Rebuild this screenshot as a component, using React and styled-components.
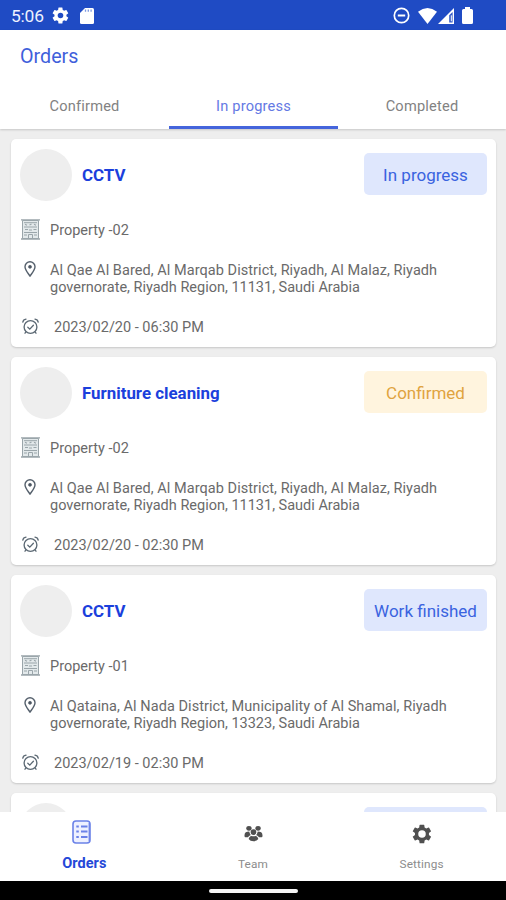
import React from "react";
import styled, { createGlobalStyle } from "styled-components";

const Global = createGlobalStyle`
  *, *::before, *::after { box-sizing: border-box; }
  body { margin: 0; background: #eee; font-family: Roboto, "Liberation Sans", sans-serif; }
`;
const Screen = styled.div`
  width: 506px; height: 900px; display: flex; flex-direction: column; overflow: hidden; background: #eeeeee;
`;
const StatusBar = styled.header`
  height: 30px; flex: none; display: flex; align-items: center; justify-content: space-between;
  padding: 1px 33px 0 11px; background: #1f4bc4; color: #fff;
`;
const StatusGroup = styled.div`
  display: flex; align-items: center;
`;
const Clock = styled.span`
  font-size: 17.4px; line-height: 20px; width: 41px; color: #eef2ff; letter-spacing: -0.2px;
`;
const Glyph = styled.svg`
  display: block; flex: none; width: ${(p) => p.$w}px; height: ${(p) => p.$h}px; margin-left: ${(p) => p.$gap || 0}px;
`;
const TopBar = styled.div`
  flex: none; height: 99px; background: #fff; display: flex; flex-direction: column; justify-content: space-between;
  box-shadow: 0 1px 2px rgba(0, 0, 0, 0.16); z-index: 1;
`;
const Title = styled.h1`
  margin: 0; padding: 14px 0 0 20px; font-size: 19.7px; font-weight: 400; line-height: 25px; color: #3f5fdb;
`;
const Tabs = styled.nav`
  display: grid; grid-template-columns: 169px 169px 168px; height: 46px;
`;
const Tab = styled.button`
  border: 0; background: none; padding: 2px 0 0; font: 400 14.6px/20px Roboto, sans-serif; letter-spacing: 0.2px;
  color: ${(p) => (p.$active ? "#6479e4" : "#828282")};
  border-bottom: 3px solid ${(p) => (p.$active ? "#4565dc" : "transparent")};
`;
const List = styled.main`
  flex: 1; min-height: 0; overflow: hidden; padding: 10px 10px 0 10.5px; display: flex; flex-direction: column; gap: 10.5px;
`;
const Card = styled.article`
  flex: none; height: 207.5px; padding: 10px 9px 0 9.5px; background: #fff; border-radius: 5px;
  box-shadow: 0 1px 2px rgba(0, 0, 0, 0.17);
`;
const CardHead = styled.div`
  display: flex; align-items: center; height: 51px;
`;
const Avatar = styled.div`
  width: 52px; height: 52px; border-radius: 50%; background: #eeeeee;
`;
const Service = styled.h2`
  flex: 1; margin: 0 0 0 10px; font-size: 16.9px; font-weight: 700; line-height: 22px; color: #1b3fdc;
`;
const Badge = styled.span`
  width: 123px; height: 42px; border-radius: 5px; display: grid; place-items: center; padding-top: 2px; margin-bottom: 2px;
  font-size: 17px; white-space: nowrap;
  background: ${(p) => (p.$tone === "amber" ? "#fff4de" : "#dfe7fd")};
  color: ${(p) => (p.$tone === "amber" ? "#dfa33f" : "#3a63e0")};
`;
const Detail = styled.div`
  display: grid; grid-template-columns: 20px 1fr; column-gap: ${(p) => p.$gap || 10}px; margin-top: ${(p) => p.$top}px;
  color: #6a6a6a; font-size: 14.5px; line-height: 17.5px;
`;
const AddressLine = styled.span`
  display: block; white-space: nowrap; letter-spacing: ${(p) => p.$spacing}px;
`;
const IconSlot = styled.span`
  display: flex; justify-content: center; align-items: flex-start; height: 18px; margin-top: ${(p) => p.$lift || 0}px;
`;
const BottomNav = styled.nav`
  flex: none; height: 69px; background: #fff; display: grid; grid-template-columns: repeat(3, 1fr); z-index: 1;
`;
const NavItem = styled.a`
  display: flex; flex-direction: column; align-items: center; color: ${(p) => (p.$active ? "#2448d8" : "#8c8c8c")};
  font-size: ${(p) => (p.$active ? 14.5 : 11.8)}px; font-weight: ${(p) => (p.$active ? 700 : 400)};
  letter-spacing: ${(p) => (p.$active ? 0.05 : 0.15)}px; line-height: 18px;
`;
const NavIcon = styled.span`
  height: ${(p) => p.$h || 43}px; display: flex; align-items: center; padding-right: ${(p) => p.$shift || 0}px;
  margin-bottom: ${(p) => 43 - (p.$h || 43)}px;
`;
const GestureBar = styled.footer`
  flex: none; height: 19px; background: #000; display: flex; justify-content: center; align-items: center; padding-top: 1px;
`;
const Handle = styled.div`
  width: 89px; height: 4px; border-radius: 2px; background: #f4f4f4;
`;

const GEAR =
  "M19.4 13a7.8 7.8 0 0 0 0-2l2.1-1.6a.5.5 0 0 0 .1-.7l-2-3.4a.5.5 0 0 0-.6-.2l-2.5 1a7.3 7.3 0 0 0-1.7-1L14.4 2.4a.5.5 0 0 0-.5-.4h-4a.5.5 0 0 0-.5.4L9 5.1a7.3 7.3 0 0 0-1.7 1l-2.5-1a.5.5 0 0 0-.6.2l-2 3.4a.5.5 0 0 0 .1.7L4.5 11a7.8 7.8 0 0 0 0 2l-2.2 1.6a.5.5 0 0 0-.1.7l2 3.4a.5.5 0 0 0 .6.2l2.5-1a7.3 7.3 0 0 0 1.7 1l.4 2.7a.5.5 0 0 0 .5.4h4a.5.5 0 0 0 .5-.4l.4-2.7a7.3 7.3 0 0 0 1.7-1l2.5 1a.5.5 0 0 0 .6-.2l2-3.4a.5.5 0 0 0-.1-.7z";

const Gear = ({ size, color, hole, r }) => (
  <Glyph $w={size} $h={size} viewBox="1.3 1.3 21.4 21.4">
    <path d={GEAR} fill={color} />
    <circle cx="12" cy="12" r={r} fill={hole} />
  </Glyph>
);
const SdCard = () => (
  <Glyph $w={14} $h={16} $gap={11} viewBox="0 0 14 16">
    <path d="M5 0H12.5Q14 0 14 1.5V14.5Q14 16 12.5 16H1.5Q0 16 0 14.5V5Z" fill="#fff" />
    <path d="M5.500 1.500v2.300M8.300 1.500v2.300M11.100 1.500v2.300" stroke="#7d98e0" strokeWidth="1.300" />
  </Glyph>
);
const DoNotDisturb = () => (
  <Glyph $w={17} $h={17} viewBox="0 0 17 17" fill="none" stroke="#fff">
    <circle cx="8.5" cy="8.5" r="7.2" strokeWidth="1.7" />
    <path d="M4.8 8.5h7.4" strokeWidth="2" />
  </Glyph>
);
const Wifi = () => (
  <Glyph $w={19} $h={16} $gap={8} viewBox="0 0 19 16">
    <path d="M0 3.8Q9.5-3.6 19 3.8L9.5 16Z" fill="#fff" />
  </Glyph>
);
const Signal = () => (
  <Glyph $w={16} $h={16} $gap={1} viewBox="0 0 16 16">
    <path d="M0 16L16 0V16Z" fill="#fff" />
    <path d="M11.2 7.3L14.6 4V14.5H11.2Z" fill="#3159c7" />
    <path d="M13.3 7.3v6" stroke="#fff" strokeWidth="1" />
  </Glyph>
);
const Battery = () => (
  <Glyph $w={11} $h={17} $gap={8} viewBox="0 0 11 17">
    <path d="M3 0h5v2H9.5Q11 2 11 3.5V15.5Q11 17 9.5 17h-8Q0 17 0 15.5v-12Q0 2 1.5 2H3z" fill="#fff" />
  </Glyph>
);
const Building = () => (
  <Glyph $w={19} $h={21} viewBox="0 0 19 21" fill="none" stroke="#9aa5aa">
    <path d="M1.5 1.5h16v18h-16z" fill="#e3e9eb" strokeWidth="1" />
    <path d="M0 .8h19M0 20h19" strokeWidth="1.3" />
    <path d="M3 3.7h13M3 8h13M3 13.5h13" strokeWidth="1" />
    <path d="M4 5.2l2 1M8.5 6l2-1M13 5.2l2 1M4 10.5h3M8 11h3M12.5 10.5h3M3 16h3M13 16h3" strokeWidth="1.2" />
    <path d="M7.5 19.5v-4h4v4" strokeWidth="1" />
  </Glyph>
);
const Pin = () => (
  <Glyph $w={12} $h={16} viewBox="0 0 12 16" fill="none" stroke="#55606c">
    <path d="M6 15C4.3 12.4 1 9.2 1 5.8A5 5 0 0 1 11 5.8C11 9.2 7.7 12.4 6 15Z" strokeWidth="1.4" />
    <circle cx="6" cy="5.8" r="1.5" fill="#4b5561" strokeWidth=".7" />
  </Glyph>
);
const Alarm = () => (
  <Glyph $w={17} $h={17} viewBox="0 0 17 17" fill="none" stroke="#5c6974" strokeLinecap="round">
    <circle cx="8.5" cy="9" r="6.4" strokeWidth="1.35" />
    <path d="M5.8 9.2l2 1.9 3.6-3.9" strokeWidth="1.3" />
    <path d="M.8 4.2Q1.200 1.600 4 1.200M16.200 4.200Q15.800 1.600 13 1.200M3.800 14.100l-.8 1.100M13.200 14.100l.8 1.100" strokeWidth="1.300" />
  </Glyph>
);
const OrdersIcon = () => (
  <Glyph $w={19} $h={24} viewBox="0 0 19 24" fill="none" stroke="#6b82e8">
    <rect x="1" y="1" width="17" height="22" rx="3" strokeWidth="1.6" fill="#eef1ff" />
    <path d="M17.2 3v18" strokeWidth="1.2" />
    <path d="M4.3 6.5h2.5M4.3 11.5h2.5M4.3 17h2.5" strokeWidth="2" />
    <path d="M9 6.5h6.5M9 11.5h6.5M9 17h6.5" strokeWidth="2" />
  </Glyph>
);
const Team = () => (
  <Glyph $w={19} $h={17} $gap={1} viewBox="0 0 20 17" fill="#505050">
    <ellipse cx="5.2" cy="3.1" rx="2.8" ry="2.5" />
    <ellipse cx="14.8" cy="3.1" rx="2.8" ry="2.5" />
    <circle cx="10" cy="7" r="3" />
    <path d="M.5 10.5C.5 7.5 2.5 6.5 5.5 6.5Q6 9 7.2 10.1Q5 10.8 4.2 12.5H1.5Q.5 12.5.5 10.5ZM19.5 10.5C19.5 7.5 17.5 6.5 14.5 6.5Q14 9 12.8 10.1Q15 10.8 15.8 12.5H18.5Q19.5 12.5 19.5 10.5Z" />
    <path d="M4.9 14.4Q5.4 11.2 8 11Q10 11.9 12 11Q14.6 11.2 15.1 14.4Q13.5 16.7 10 16.7T4.9 14.4Z" />
  </Glyph>
);

const AL_MALAZ = ["Al Qae Al Bared, Al Marqab District, Riyadh, Al Malaz, Riyadh", "governorate, Riyadh Region, 11131, Saudi Arabia"];
const AL_SHAMAL = ["Al Qataina, Al Nada District, Municipality of Al Shamal, Riyadh", "governorate, Riyadh Region, 13323, Saudi Arabia"];
const orders = [
  { service: "CCTV", status: "In progress", property: "Property -02", address: AL_MALAZ, time: "2023/02/20 - 06:30 PM" },
  { service: "Furniture cleaning", status: "Confirmed", tone: "amber", property: "Property -02", address: AL_MALAZ, time: "2023/02/20 - 02:30 PM" },
  { service: "CCTV", status: "Work finished", property: "Property -01", address: AL_SHAMAL, time: "2023/02/19 - 02:30 PM" },
];

const OrderCard = ({ order }) => (
  <Card>
    <CardHead>
      <Avatar />
      <Service>{order.service}</Service>
      <Badge $tone={order.tone}>{order.status}</Badge>
    </CardHead>
    <Detail $top={22}>
      <IconSlot $lift={-3}><Building /></IconSlot>
      <span>{order.property}</span>
    </Detail>
    <Detail $top={22}>
      <IconSlot $lift={-1}><Pin /></IconSlot>
      <span>
        <AddressLine $spacing={0.055}>{order.address[0]}</AddressLine>
        <AddressLine $spacing={0}>{order.address[1]}</AddressLine>
      </span>
    </Detail>
    <Detail $top={22} $gap={14}>
      <IconSlot $lift={-1}><Alarm /></IconSlot>
      <span>{order.time}</span>
    </Detail>
  </Card>
);

export default function App() {
  return (
    <Screen>
      <Global />
      <StatusBar>
        <StatusGroup>
          <Clock>5:06</Clock>
          <Gear size={17} color="#fff" hole="#1f4bc4" r={3.5} />
          <SdCard />
        </StatusGroup>
        <StatusGroup>
          <DoNotDisturb />
          <Wifi />
          <Signal />
          <Battery />
        </StatusGroup>
      </StatusBar>
      <TopBar>
        <Title>Orders</Title>
        <Tabs>
          <Tab>Confirmed</Tab>
          <Tab $active>In progress</Tab>
          <Tab>Completed</Tab>
        </Tabs>
      </TopBar>
      <List>
        {orders.map((order, i) => <OrderCard key={i} order={order} />)}
        <Card>
          <CardHead>
            <Avatar />
            <Service />
            <Badge />
          </CardHead>
        </Card>
      </List>
      <BottomNav>
        <NavItem $active><NavIcon $h={40} $shift={6}><OrdersIcon /></NavIcon>Orders</NavItem>
        <NavItem><NavIcon><Team /></NavIcon>Team</NavItem>
        <NavItem><NavIcon><Gear size={20} color="#505050" hole="#fff" r={4} /></NavIcon>Settings</NavItem>
      </BottomNav>
      <GestureBar><Handle /></GestureBar>
    </Screen>
  );
}
